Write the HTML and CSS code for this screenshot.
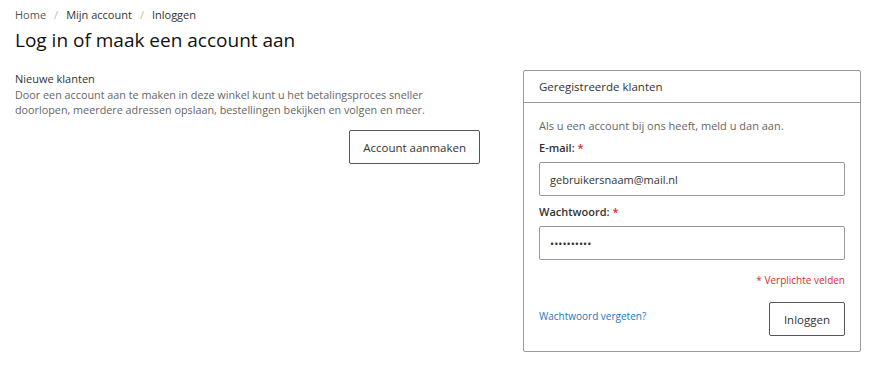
FILE: index.html
```html
<!DOCTYPE html>
<html lang="nl">
<head>
<meta charset="utf-8">
<title>Inloggen</title>
<link rel="stylesheet" href="styles.css">
</head>
<body>
<div class="page">
  <nav class="breadcrumbs">
    <a class="crumb crumb-home" href="#">Home</a>
    <span class="sep">/</span>
    <a class="crumb" href="#">Mijn account</a>
    <span class="sep">/</span>
    <span class="crumb current">Inloggen</span>
  </nav>
  <h1 class="title">Log in of maak een account aan</h1>
  <div class="columns">
    <section class="new-customers">
      <h2 class="block-title">Nieuwe klanten</h2>
      <p class="desc">Door een account aan te maken in deze winkel kunt u het betalingsproces sneller doorlopen, meerdere adressen opslaan, bestellingen bekijken en volgen en meer.</p>
      <div class="actions-right">
        <a class="btn" href="#">Account aanmaken</a>
      </div>
    </section>
    <section class="login-box">
      <div class="box-header">Geregistreerde klanten</div>
      <form class="box-body">
        <p class="intro">Als u een account bij ons heeft, meld u dan aan.</p>
        <label class="label">E-mail: <span class="req">*</span></label>
        <input class="input" type="text" value="gebruikersnaam@mail.nl">
        <label class="label">Wachtwoord: <span class="req">*</span></label>
        <input class="input" type="password" value="wachtwoord">
        <div class="required-note">* Verplichte velden</div>
        <div class="form-actions">
          <a class="forgot" href="#">Wachtwoord vergeten?</a>
          <button class="btn" type="button">Inloggen</button>
        </div>
      </form>
    </section>
  </div>
</div>
</body>
</html>
```
FILE: styles.css
```css
* { box-sizing: border-box; }
html, body { margin: 0; padding: 0; background: #fff; }
body {
  font-family: "Open Sans", "Noto Sans", sans-serif;
  color: #333;
  font-size: 11px;
}
.page { padding: 7px 14px 0 15px; width: 875px; }
.breadcrumbs { display: flex; align-items: center; font-size: 11px; line-height: 16px; }
.crumb { color: #333; text-decoration: none; }
.crumb-home { color: #555; }
.sep { color: #bbb; margin: 0 8px; }
.title {
  font-size: 19px;
  font-weight: 400;
  margin: 4px 0 0 0;
  line-height: 26px;
  color: #111;
}
.columns {
  display: flex;
  justify-content: space-between;
  margin-top: 17px;
}
.new-customers { width: 465px; padding-top: 1px; }
.block-title { font-size: 11px; font-weight: 400; margin: 0; line-height: 15px; color: #333; }
.desc { margin: 1px 0 0 0; line-height: 15px; color: #666; font-size: 10.8px; }
.actions-right { display: flex; justify-content: flex-end; margin-top: 13px; }
.btn {
  display: inline-flex; align-items: center; justify-content: center;
  height: 34px; padding: 0 13px;
  border: 1px solid #555; border-radius: 2px; background: #fff;
  color: #333; font-family: inherit; font-size: 11.5px; text-decoration: none;
}
.login-box {
  width: 338px;
  border: 1px solid #999;
  border-radius: 2px;
}
.box-header {
  height: 32px; line-height: 31px;
  padding: 0 15px;
  border-bottom: 1px solid #999;
  font-size: 11.5px; color: #333;
}
.box-body { display: flex; flex-direction: column; padding: 15px 15px 15px 15px; }
.intro { margin: 0; line-height: 16px; color: #666; font-size: 11px; }
.label { font-weight: 600; color: #333; line-height: 16px; margin-top: 6px; font-size: 11px; }
.req { color: #e02b27; }
.input {
  height: 34px; margin-top: 6px; padding: 0 10px;
  border: 1px solid #999; border-radius: 2px;
  font-family: inherit; font-size: 11px; color: #333;
}
.input + .label { margin-top: 8px; }
.required-note { text-align: right; color: #e02b27; font-size: 10px; margin-top: 13px; line-height: 14px; }
.form-actions { display: flex; justify-content: space-between; align-items: center; margin-top: 15px; }
.btn[type="button"] { padding: 0 14px; }
.forgot { color: #1979c3; text-decoration: none; font-size: 10px; margin-top: -6px; }
```
